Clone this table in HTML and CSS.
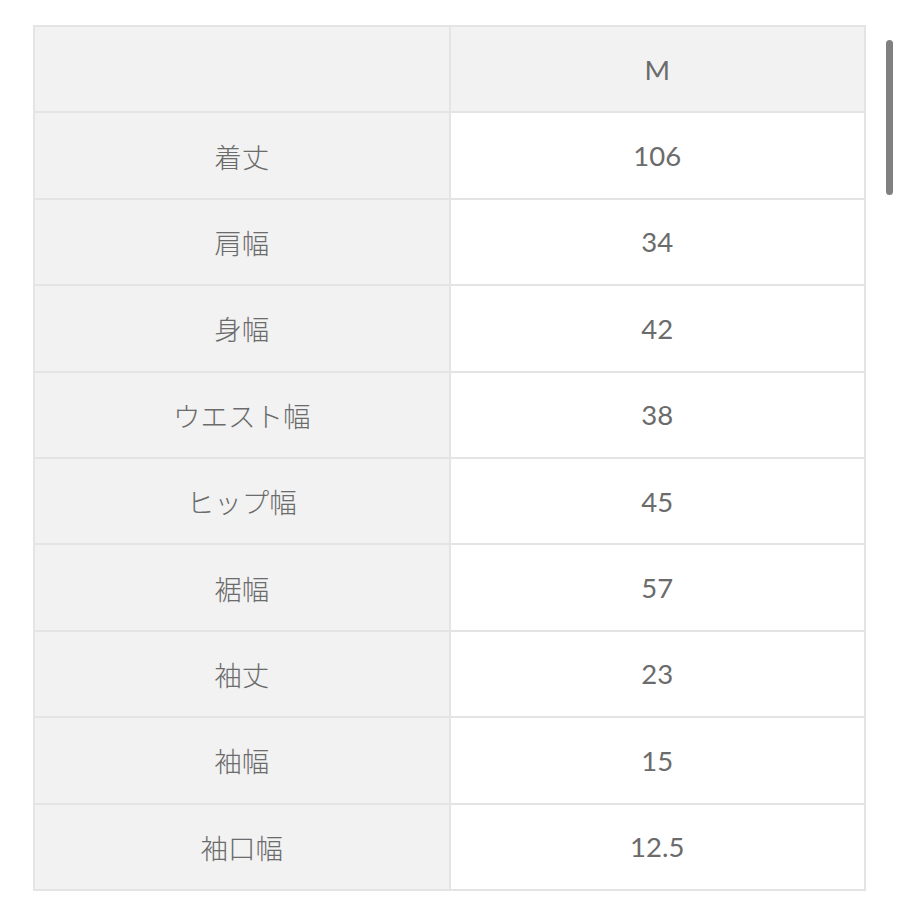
FILE: index.html
```html
<!DOCTYPE html>
<html lang="ja">
<head>
<meta charset="utf-8">
<link rel="stylesheet" href="styles.css">
</head>
<body>
<div class="page">
  <table class="size-table">
    <tr class="head"><td class="label"></td><td class="label size">M</td></tr>
    <tr><td class="label">着丈</td><td class="value">106</td></tr>
    <tr><td class="label">肩幅</td><td class="value">34</td></tr>
    <tr><td class="label">身幅</td><td class="value">42</td></tr>
    <tr><td class="label">ウエスト幅</td><td class="value">38</td></tr>
    <tr><td class="label">ヒップ幅</td><td class="value">45</td></tr>
    <tr><td class="label">裾幅</td><td class="value">57</td></tr>
    <tr><td class="label">袖丈</td><td class="value">23</td></tr>
    <tr><td class="label">袖幅</td><td class="value">15</td></tr>
    <tr><td class="label">袖口幅</td><td class="value">12.5</td></tr>
  </table>
</div>
<div class="scrollbar"></div>
</body>
</html>
```

FILE: styles.css
```css
html, body {
  margin: 0;
  padding: 0;
  background: #ffffff;
}
body {
  font-family: Lato, "Noto Sans CJK JP", sans-serif;
  color: #6b6b6b;
}
.page {
  padding: 25px 34px 0 33px;
}
.size-table {
  width: 833px;
  border-collapse: collapse;
  table-layout: fixed;
}
.size-table td {
  height: 86.4px;
  box-sizing: border-box;
  border: 2px solid #e4e4e4;
  text-align: center;
  vertical-align: middle;
  font-size: 27.5px;
  padding: 0;
}
.size-table td.label {
  background: #f2f2f2;
  font-weight: 300;
}
.size-table td.size {
  font-weight: 400;
}
.size-table td.value {
  background: #ffffff;
  font-weight: 400;
}
.scrollbar {
  position: absolute;
  left: 886px;
  top: 40px;
  width: 7px;
  height: 155px;
  border-radius: 4px;
  background: #808080;
}
```
